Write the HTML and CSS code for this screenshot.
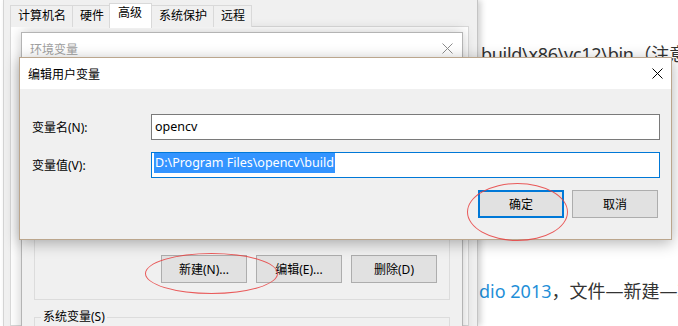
FILE: index.html
```html
<!DOCTYPE html>
<html>
<head>
<meta charset="UTF-8">
<title>编辑用户变量</title>
<link rel="stylesheet" href="styles.css">
</head>
<body>

<!-- PAGE BEHIND -->
<div class="article">
<p class="line1">build\x86\vc12\bin（注意</p>
<p class="line2"><span class="link">dio 2013</span>，文件—新建—项目</p>
</div>

<!-- SYSTEM PROPERTIES -->
<div class="sysprop">
<div class="tabs">
<span class="tab">计算机名</span>
<span class="tab">硬件</span>
<span class="tab on">高级</span>
<span class="tab">系统保护</span>
<span class="tab">远程</span>
</div>
<div class="tabpage"></div>
</div>

<!-- ENVIRONMENT VARIABLES -->
<div class="envdlg">
<div class="titlebar dim">
<span>环境变量</span>
<svg class="close" width="11" height="11" viewBox="0 0 11 11"><path d="M0.5 0.5L10.5 10.5M10.5 0.5L0.5 10.5" stroke="#8c8c8c" stroke-width="1" fill="none"/></svg>
</div>
<div class="envbody">
<div class="group">
<div class="btnrow">
<button class="btn">新建(N)...</button>
<button class="btn">编辑(E)...</button>
<button class="btn">删除(D)</button>
</div>
</div>
<fieldset class="sysgroup">
<legend>系统变量(S)</legend>
</fieldset>
</div>
</div>

<!-- EDIT USER VARIABLE -->
<div class="editdlg">
<div class="titlebar">
<span>编辑用户变量</span>
<svg class="close" width="11" height="11" viewBox="0 0 11 11"><path d="M0.5 0.5L10.5 10.5M10.5 0.5L0.5 10.5" stroke="#000" stroke-width="1" fill="none"/></svg>
</div>
<div class="editbody">
<div class="row">
<label>变量名(N):</label>
<div class="field">opencv</div>
</div>
<div class="row">
<label>变量值(V):</label>
<div class="field focus"><span class="sel">D:\Program Files\opencv\build</span></div>
</div>
<div class="actions">
<button class="btn default">确定</button>
<button class="btn">取消</button>
</div>
</div>
</div>

<!-- RED MARKS -->
<div class="mark mark-ok"></div>
<div class="mark mark-new"></div>

</body>
</html>
```

FILE: styles.css
```css
*{box-sizing:border-box;}

body{
margin:0;
width:678px;
height:326px;
overflow:hidden;
position:relative;
background:white;
font-family:"Noto Sans","Noto Sans CJK SC",sans-serif;
font-size:12px;
color:#000;
}

/* PAGE BEHIND */
.article{
padding-left:479px;
font-size:18px;
line-height:30px;
color:#333;
white-space:nowrap;
overflow:hidden;
}
.article p{margin:0;}
.article .line1{margin-top:39px;text-indent:2px;letter-spacing:-0.3px;}
.article .line2{margin-top:207px;}
.link{color:#1f8fd8;}

/* SYSTEM PROPERTIES */
.sysprop{
position:absolute;
left:3px;
top:0;
width:475px;
height:326px;
background:#f0f0f0;
border-left:1px solid #d4d4d4;
border-right:1px solid #c4c4c4;
box-shadow:3px 0 6px rgba(0,0,0,0.18);
padding:5px 8px 0 6px;
}

.tabs{
display:flex;
height:22px;
position:relative;
z-index:1;
}

.tab{
min-width:33px;
padding:0 6px 0 7px;
line-height:20px;
border:1px solid #d9d9d9;
border-bottom:none;
margin-right:-1px;
background:#f0f0f0;
}

.tab.on{
background:white;
margin:-2px -1px 0 -1px;
height:25px;
padding:0 9px 0 8px;
line-height:18px;
position:relative;
}

.tabpage{
height:300px;
margin-top:-1px;
background:white;
border:1px solid #d9d9d9;
}

/* WINDOWS */
.titlebar{
display:flex;
align-items:center;
justify-content:space-between;
height:31px;
background:white;
padding:0 8px;
}
.titlebar.dim{color:#a0a0a0;padding:0 9px 0 8px;}

.envdlg{
position:absolute;
left:21px;
top:32px;
width:442px;
height:310px;
border:1px solid #b4b4b4;
background:#f0f0f0;
box-shadow:0 0 12px rgba(0,0,0,0.22);
}

.envbody{padding:6px 12px 0 12px;}

.group{
border:1px solid #dcdcdc;
padding:184px 12px 16px 0;
}

.btnrow{
display:flex;
justify-content:flex-end;
gap:9px;
}

.btn{
width:86px;
height:28px;
border:1px solid #adadad;
background:#e1e1e1;
font-family:inherit;
font-size:12px;
color:#000;
padding:0;
}

.sysgroup{
margin:9px 0 0 0;
border:1px solid #dcdcdc;
padding:0 6px;
height:40px;
}
.sysgroup legend{padding:0 2px;line-height:16px;}

/* EDIT DIALOG */
.editdlg{
position:absolute;
left:19px;
top:57px;
width:653px;
height:183px;
background:#f0f0f0;
border:1px solid #bba68d;
box-shadow:0 3px 14px rgba(0,0,0,0.3);
}

.editbody{padding:25px 11px 0 12px;}

.row{
display:flex;
align-items:center;
height:26px;
margin-bottom:12px;
}

.row label{width:119px;}

.field{
flex:1;
height:26px;
border:1px solid #7a7a7a;
background:white;
padding:0 3px;
line-height:24px;
font-size:12.5px;
}

.field.focus{
border-color:#0078d7;
padding:0 2px;
line-height:20px;
}

.sel{
display:inline-block;
background:#3394ff;
color:white;
padding:0 1px;
}

.actions{
display:flex;
justify-content:flex-end;
gap:8px;
margin:5px 2px 0 0;
}

.btn.default{border:2px solid #0078d7;}

/* RED MARKS */
.mark{
position:absolute;
border:1px solid rgba(232,64,64,0.85);
border-radius:50%;
}
.mark-ok{left:467px;top:183px;width:101px;height:58px;}
.mark-new{left:145px;top:253px;width:133px;height:41px;}
```
